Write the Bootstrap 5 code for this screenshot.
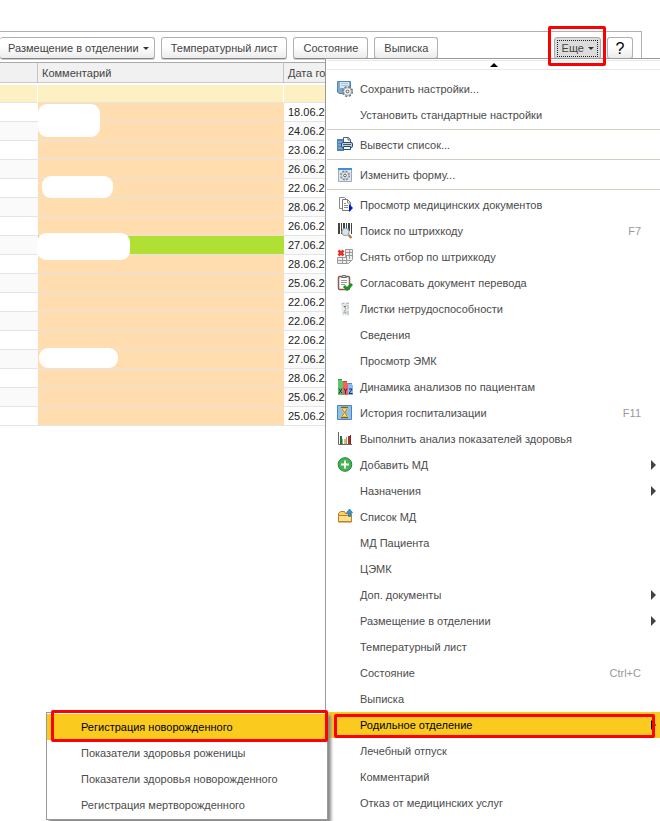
<!DOCTYPE html>
<html lang="ru">
<head>
<meta charset="utf-8">
<meta name="viewport" content="width=device-width, initial-scale=1">
<title>Список пациентов</title>
<link href="https://cdn.jsdelivr.net/npm/bootstrap@5.3.0/dist/css/bootstrap.min.css" rel="stylesheet">
<style>
body{font-family:"Liberation Sans",Arial,sans-serif;font-size:12px;line-height:16px;color:#333;background:#fff;overflow-x:hidden}
.screen{padding-top:31px;min-height:821px}
.toolpanel{border:1px solid #b0b0b0;border-width:1px 1px 0 0;margin-right:18px;padding:5px 8px 3px 0;gap:6px}
.tool{height:22px;padding:0 9px;font-size:11px;line-height:19px;color:#444;white-space:nowrap;border:1px solid #b0b0b0;border-bottom-color:#858585;border-radius:3px;background:linear-gradient(#fff 40%,#ececec);box-shadow:0 1px 0 #ccc}
.tool.first{border-left:0;padding:0 4px 0 8px}
.tool.first svg,.tool.more svg{margin-left:4px}
.tool.more{background:#dcdcdc;padding:0 2px;border-color:#aaa}
.tool.more .dots{display:block;border:1px dotted #222;line-height:15px;padding:0 2px 0 4px}
.tool.help{font-size:16px;color:#000;padding:0;width:26px}
.callout{position:absolute;border:3px solid #f00;border-radius:2px;pointer-events:none;z-index:20}
.callout-more{inset:-11px -5px -7px -6px}
.callout-item{inset:2px 5px 0 7px}
.callout-sub{inset:-4px -1px -2px 4px}
.grid{width:100%;table-layout:fixed;border-collapse:separate;border-spacing:0;font-size:11px}
.grid th{height:21px;padding:0 4px;font-weight:400;background:#f1f1f1;border-top:1px solid #aaa;border-bottom:1px solid #c8c8c8;border-right:1px solid #c4c4c4;color:#444}
.grid td{height:19px;padding:0 4px;border-bottom:1px solid #e4e4e4;position:relative;line-height:17px;color:#222;white-space:nowrap;overflow:visible}
.grid .c1{width:38px}.grid .c2{width:246px}
.grid tr.group td{height:20px;background:#fdf1c4;border-top:2px solid #fff;border-right:1px solid #fff}
.grid tr:nth-child(odd) td{background:#fafafa}
.grid tr.group td{background:#fdf1c4}
.grid tr td.note{background:#ffddae}
.grid tr td.note.ok{background:#afe033}
.blank{position:absolute;background:#fff;border-radius:9px;z-index:1}
.b1{left:0;top:1px;width:62px;height:33px}
.b2{left:4px;top:-3px;width:71px;height:22px}
.b3{left:-1px;top:-3px;width:93px;height:27px}
.b4{left:1px;top:-2px;width:79px;height:20px}
.menu{--bs-dropdown-bg:#fff;display:block;position:absolute;z-index:10;margin:0;padding:0;border:1px solid #999;border-radius:0;font-size:11px;min-width:0}
.mainmenu{z-index:auto;left:325px;right:0;top:58px;bottom:0;min-height:763px;border-width:1px 0 0 1px;padding:1px 0 4px}
.mainmenu>li:not(.line),.mainmenu>.scroller{margin-left:1px}
.scroller{height:10px;border-top:1px solid #e8e8e8;border-bottom:1px solid #e8e8e8;margin-bottom:6px}
.menu .entry{display:flex;align-items:center;width:100%;height:26px;padding:0 3px 0 10px;color:#4c4c4c;white-space:nowrap;background:none;border:0;text-align:left;border-radius:0;font-size:11px}
.entry .ico{width:16px;height:16px;margin-right:7px;flex:none}
.entry .key{margin-left:auto;margin-right:16px;color:#999}
.entry .arr{margin-left:auto;flex:none}
.line{height:4px;padding-top:1px}
.line hr{margin:0 0 0 1px;border:0;border-top:1px solid #d2cfc2;opacity:1}
.menu .entry.hot{background:#facb1e;color:#000}
.submenu{top:0;right:calc(100% - 1px);width:282px;padding:1px 0;box-shadow:3px 3px 3px #888;z-index:12}
.submenu .entry{padding-left:34px}
</style>
<script src="https://cdn.jsdelivr.net/npm/bootstrap@5.3.0/dist/js/bootstrap.bundle.min.js"></script>
</head>
<body>
<main class="screen position-relative">
<div class="toolpanel d-flex">
<button class="tool first" type="button">Размещение в отделении<svg width="7" height="4"><path d="M0 0h6L3 3z" fill="#333"/></svg></button>
<button class="tool" type="button">Температурный лист</button>
<button class="tool" type="button">Состояние</button>
<button class="tool" type="button">Выписка</button>
<div class="position-relative ms-auto d-flex"><button class="tool more" type="button"><span class="dots">Еще<svg width="7" height="4"><path d="M0 0h6L3 3z" fill="#333"/></svg></span></button><span class="callout callout-more"></span></div>
<button class="tool help" type="button">?</button>
</div>
<table class="grid">
<colgroup><col class="c1"><col class="c2"><col></colgroup>
<thead><tr><th></th><th>Комментарий</th><th>Дата го</th></tr></thead>
<tbody>
<tr class="group"><td></td><td></td><td></td></tr>
<tr><td></td><td class="note"><span class="blank b1"></span></td><td>18.06.20</td></tr>
<tr><td></td><td class="note"></td><td>24.06.20</td></tr>
<tr><td></td><td class="note"></td><td>23.06.20</td></tr>
<tr><td></td><td class="note"></td><td>26.06.20</td></tr>
<tr><td></td><td class="note"><span class="blank b2"></span></td><td>22.06.20</td></tr>
<tr><td></td><td class="note"></td><td>28.06.20</td></tr>
<tr><td></td><td class="note"></td><td>26.06.20</td></tr>
<tr><td></td><td class="note ok"><span class="blank b3"></span></td><td>27.06.20</td></tr>
<tr><td></td><td class="note"></td><td>28.06.20</td></tr>
<tr><td></td><td class="note"></td><td>25.06.20</td></tr>
<tr><td></td><td class="note"></td><td>22.06.20</td></tr>
<tr><td></td><td class="note"></td><td>22.06.20</td></tr>
<tr><td></td><td class="note"></td><td>22.06.20</td></tr>
<tr><td></td><td class="note"><span class="blank b4"></span></td><td>27.06.20</td></tr>
<tr><td></td><td class="note"></td><td>28.06.20</td></tr>
<tr><td></td><td class="note"></td><td>25.06.20</td></tr>
<tr><td></td><td class="note"></td><td>25.06.20</td></tr>
</tbody>
</table>
<ul class="menu mainmenu dropdown-menu list-unstyled">
<li class="scroller d-flex justify-content-center align-items-center"><svg width="8" height="4"><path d="M0 4L4 0l4 4z" fill="#000"/></svg></li>
<li><button class="entry" type="button"><svg class="ico" viewBox="0 0 16 16"><path d="M.5.5h13v12H2L.5 11z" fill="#7fabd0" stroke="#5583ae"/><path d="M3 1h9v6H3z" fill="#d8e8f5"/><path d="M4 2.500h7M4 4.500h7" stroke="#a9c6de"/><circle cx="10.500" cy="10.500" r="4.700" fill="none" stroke="#6f7881" stroke-width="1.800" stroke-dasharray="2.200 1.490"/><circle cx="10.500" cy="10.500" r="3.900" fill="#f4f4f4" stroke="#8b939b" stroke-width=".8"/><circle cx="10.500" cy="10.500" r="1.400" fill="#fff" stroke="#555"/></svg>Сохранить настройки...</button></li>
<li><button class="entry" type="button"><span class="ico"></span>Установить стандартные настройки</button></li>
<li class="line"><hr></li>
<li><button class="entry" type="button"><svg class="ico" viewBox="0 0 16 16"><path d="M0 2h7v12H0z" fill="#4d83b5"/><path d="M1 5h5M1 8h5M1 11h5" stroke="#a9c8e4"/><path d="M6.500.5h5l2 2v4h-7z" fill="#fff" stroke="#3f6286"/><path d="M11 1v2h2" fill="none" stroke="#3f6286"/><rect x="4.500" y="5.500" width="11" height="5" rx="1.500" fill="#c9d4df" stroke="#274a6d"/><path d="M6 7.500h8" stroke="#385c80"/><path d="M6.500 9.500h7v3h-7z" fill="#fff" stroke="#274a6d"/></svg>Вывести список...</button></li>
<li class="line"><hr></li>
<li><button class="entry" type="button"><svg class="ico" viewBox="0 0 16 16"><path d="M1.500 1.500h13v13h-13z" fill="#dfe5ea" stroke="#9badbd"/><path d="M1 1h14v2H1z" fill="#3c8fd8"/><circle cx="8" cy="8.500" r="4.200" fill="none" stroke="#7f8a93" stroke-width="1.600" stroke-dasharray="2 1.300"/><circle cx="8" cy="8.500" r="3.500" fill="#f4f4f4" stroke="#98a1a8" stroke-width=".8"/><circle cx="8" cy="8.500" r="1.400" fill="#fff" stroke="#555"/></svg>Изменить форму...</button></li>
<li class="line"><hr></li>
<li><button class="entry" type="button"><svg class="ico" viewBox="0 0 16 16"><path d="M2.500.5h5l2 2v9h-7z" fill="#fff" stroke="#888"/><path d="M5.500 2.500h5l3 3v8h-8z" fill="#fff" stroke="#777"/><path d="M10.500 3v3h3M7 6.500h2M7 8.500h4M7 10.500h4" fill="none" stroke="#888"/><path d="M12 7l4 4-4 4z" fill="#0014dc"/></svg>Просмотр медицинских документов</button></li>
<li><button class="entry" type="button"><svg class="ico" viewBox="0 0 16 16"><path d="M1 0h2v11H1zM4 0h1v11H4zM6 0h2v8H6zM9 0h1v6H9zM11 0h2v8h-2zM14 0h1v11h-1z" fill="#444"/><circle cx="8.500" cy="9" r="3.700" fill="#d0e6f5" stroke="#999"/><path d="M11.500 12l3 3" stroke="#b9783e" stroke-width="2.400"/></svg>Поиск по штрихкоду<span class="key">F7</span></button></li>
<li><button class="entry" type="button"><svg class="ico" viewBox="0 0 16 16"><path d="M8.500.5h7v10l-4 4H.5v-6h8z" fill="#eee" stroke="#999"/><path d="M9 3.500h6M9 6.500h6M1 11.500h13M5.500 9v5M9.500 7v7M12.500 1v9" stroke="#999"/><path d="M1.500 1.500l5 5M6.500 1.500l-5 5" stroke="#df3428" stroke-width="2.800"/></svg>Снять отбор по штрихкоду</button></li>
<li><button class="entry" type="button"><svg class="ico" viewBox="0 0 16 16"><rect x="1.500" y="1.500" width="11" height="13" rx="1" fill="#fff" stroke="#855c50" stroke-width="1.500"/><path d="M4.500 2.500l1-2h3l1 2z" fill="#ddd" stroke="#666"/><path d="M4 5.500h6M4 7.500h6M4 9.500h4" stroke="#999"/><path d="M7 11l3 3 5-5" fill="none" stroke="#169421" stroke-width="3"/></svg>Согласовать документ перевода</button></li>
<li><button class="entry" type="button"><svg class="ico" viewBox="0 0 16 16"><path d="M4 2l8-1v13l-7 1z" fill="#e9ecec"/><path d="M4.500 3l3-1M9 3l3-1M6 5l2 1 1 3-2 1 2 3M11 4v4M6 12l4-1M11 10v4" fill="none" stroke="#aab0b0"/><path d="M7 6l2-1" stroke="#555"/></svg>Листки нетрудоспособности</button></li>
<li><button class="entry" type="button"><span class="ico"></span>Сведения</button></li>
<li><button class="entry" type="button"><span class="ico"></span>Просмотр ЭМК</button></li>
<li><button class="entry" type="button"><svg class="ico" viewBox="0 0 16 16"><path d="M1 0h4v2h1v14H1z" fill="#5fc863"/><path d="M6 2h4v2h1v12H6z" fill="#fb5f5f"/><path d="M11 4h4v2h1v10h-5z" fill="#86bdf5"/><path d="M1 .5h4M6 2.500h4M11 4.500h4" stroke="#1d6a30" stroke-opacity=".5"/><path d="M2 9.500l3 5M5 9.500l-3 5M7 9.500l1.500 2.500L10 9.500M8.500 12v3M12 10h3l-3 4.500h3.500" fill="none" stroke="#222a5c"/></svg>Динамика анализов по пациентам</button></li>
<li><button class="entry" type="button"><svg class="ico" viewBox="0 0 16 16"><path d="M.5.5h14v14H.5z" fill="#8fc0e8" stroke="#4986bd"/><path d="M4 2h7v2L8.500 7.500 11 11v2H4v-2l2.500-3.500L4 4z" fill="#f4de86"/><path d="M4 2.500h7M4 12.500h7" stroke="#8c5c17" stroke-width="1.500"/><path d="M5 4l2.500 3.500L5 11M10 4L8 7.500 10 11" fill="none" stroke="#a37527"/></svg>История госпитализации<span class="key">F11</span></button></li>
<li><button class="entry" type="button"><svg class="ico" viewBox="0 0 16 16"><path d="M1.500 1v12.500H15" fill="none" stroke="#666"/><path d="M3 5h2v8H3z" fill="#24723d"/><path d="M5 8h1v5H5z" fill="#7fba84"/><path d="M7 8h2v5H7z" fill="#e0bb60"/><path d="M9 6h1v7H9z" fill="#9c9c9c"/><path d="M11 5h2v8h-2z" fill="#b42d26"/><path d="M13 4h1v9h-1z" fill="#7d2620"/></svg>Выполнить анализ показателей здоровья</button></li>
<li><button class="entry" type="button"><svg class="ico" viewBox="0 0 16 16"><circle cx="8" cy="7.500" r="6.800" fill="#42b551" stroke="#238033"/><path d="M8 3.500v8M4 7.500h8" stroke="#fff" stroke-width="2"/></svg>Добавить МД<svg class="arr" width="6" height="10"><path d="M0 0l5 5-5 5z" fill="#444"/></svg></button></li>
<li><button class="entry" type="button"><span class="ico"></span>Назначения<svg class="arr" width="6" height="10"><path d="M0 0l5 5-5 5z" fill="#444"/></svg></button></li>
<li><button class="entry" type="button"><svg class="ico" viewBox="0 0 16 16"><path d="M1.500 13V4.500l2-2h4l1 2h6V13z" fill="#f5cf72" stroke="#b87a25"/><path d="M1.500 6.500h13v6h-13z" fill="#ffdf8b" stroke="#bd812b"/><path d="M12.500 0L9.500 3.500h2v4h2v-4h2z" fill="#299de3" stroke="#1971aa" stroke-width=".7"/></svg>Список МД</button></li>
<li><button class="entry" type="button"><span class="ico"></span>МД Пациента</button></li>
<li><button class="entry" type="button"><span class="ico"></span>ЦЭМК</button></li>
<li><button class="entry" type="button"><span class="ico"></span>Доп. документы<svg class="arr" width="6" height="10"><path d="M0 0l5 5-5 5z" fill="#444"/></svg></button></li>
<li><button class="entry" type="button"><span class="ico"></span>Размещение в отделении<svg class="arr" width="6" height="10"><path d="M0 0l5 5-5 5z" fill="#444"/></svg></button></li>
<li><button class="entry" type="button"><span class="ico"></span>Температурный лист</button></li>
<li><button class="entry" type="button"><span class="ico"></span>Состояние<span class="key">Ctrl+C</span></button></li>
<li><button class="entry" type="button"><span class="ico"></span>Выписка</button></li>
<li class="position-relative"><button class="entry hot" type="button"><span class="ico"></span>Родильное отделение<svg class="arr" width="6" height="10"><path d="M0 0l5 5-5 5z" fill="#000"/></svg></button><span class="callout callout-item"></span>
<ul class="menu submenu dropdown-menu list-unstyled">
<li class="position-relative"><button class="entry hot" type="button">Регистрация новорожденного</button><span class="callout callout-sub"></span></li>
<li><button class="entry" type="button">Показатели здоровья роженицы</button></li>
<li><button class="entry" type="button">Показатели здоровья новорожденного</button></li>
<li><button class="entry" type="button">Регистрация мертворожденного</button></li>
</ul></li>
<li><button class="entry" type="button"><span class="ico"></span>Лечебный отпуск</button></li>
<li><button class="entry" type="button"><span class="ico"></span>Комментарий</button></li>
<li><button class="entry" type="button"><span class="ico"></span>Отказ от медицинских услуг</button></li>
</ul>
</main>
</body>
</html>
